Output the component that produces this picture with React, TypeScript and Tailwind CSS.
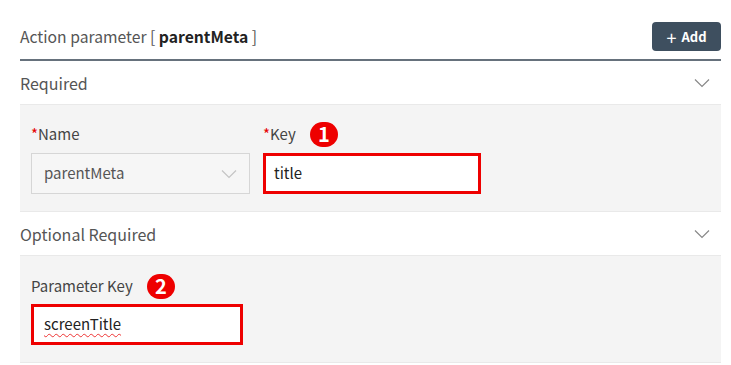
import React from 'react';

const FONT = { fontFamily: '"Noto Sans CJK KR", "Noto Sans", sans-serif' };

function Chevron({ className }: { className?: string }) {
  return (
    <svg width="16" height="10" viewBox="0 0 16 10" className={className} fill="none">
      <path d="M1 1.5 L8 8.5 L15 1.5" stroke="currentColor" strokeWidth="1.2" />
    </svg>
  );
}

function Badge({ n, className }: { n: number; className?: string }) {
  return (
    <span
      className={`flex h-[25px] w-[28px] items-center justify-center rounded-full bg-[#ee0000] text-[20px] font-bold leading-none text-white ${className ?? ''}`}
    >
      {n}
    </span>
  );
}

export default function App() {
  return (
    <div style={FONT} className="h-[365px] w-[731px] bg-white pl-[20px] pr-[10px]">
      {/* header */}
      <div className="flex h-[61px] items-center justify-between border-b-2 border-[#66717c] pt-[14px]">
        <div className="text-[15.7px] text-[#555]">
          Action parameter [ <span className="font-bold text-[#222]">parentMeta</span> ]
        </div>
        <button
          type="button"
          className="flex h-[29px] w-[69px] items-center justify-center gap-[5px] rounded-[4px] bg-[#3e4f5f] text-[13px] font-bold text-white"
        >
          <span className="text-[18px] font-normal leading-none">+</span>
          Add
        </button>
      </div>

      {/* Required */}
      <div className="flex h-[43px] items-center justify-between pr-[11px] text-[16px] text-[#555]">
        <span>Required</span>
        <Chevron className="text-[#888]" />
      </div>
      <div className="flex h-[108px] gap-[13px] border-y border-[#e9e9e9] bg-[#f4f4f4] px-[11px] pt-[19px]">
        <div className="flex flex-col">
          <label className="flex h-[20px] items-center text-[15px] text-[#444]">
            <span className="text-[#e60000]">*</span>Name
          </label>
          <div className="mt-[9px] flex h-[41px] w-[219px] items-center justify-between border border-[#d6d6d6] bg-[#f6f6f6] pl-[12px] pr-[12px] text-[15px] text-[#555]">
            parentMeta
            <Chevron className="text-[#c4c4c4]" />
          </div>
        </div>
        <div className="flex flex-col">
          <label className="flex h-[20px] items-center text-[15px] text-[#444]">
            <span className="text-[#e60000]">*</span>Key
            <Badge n={1} className="ml-[14px]" />
          </label>
          <div className="mt-[9px] flex h-[41px] w-[218px] items-center border-[3px] border-[#ee0000] bg-white pl-[8px] text-[15px] text-[#222]">
            title
          </div>
        </div>
      </div>

      {/* Optional Required */}
      <div className="flex h-[43px] items-center justify-between pr-[11px] text-[16px] text-[#555]">
        <span>Optional Required</span>
        <Chevron className="text-[#888]" />
      </div>
      <div className="flex h-[108px] flex-col border-y border-[#e9e9e9] bg-[#f4f4f4] px-[11px] pt-[19px]">
        <label className="flex h-[22px] items-center text-[15px] text-[#444]">
          Parameter Key
          <Badge n={2} className="ml-[14px]" />
        </label>
        <div className="mt-[7px] flex h-[41px] w-[212px] items-center border-[3px] border-[#ee0000] bg-white pl-[10px] text-[15px] text-[#222]">
          <span className="underline decoration-[#e33] decoration-wavy decoration-1 underline-offset-[3px]">
            screenTitle
          </span>
        </div>
      </div>
    </div>
  );
}
